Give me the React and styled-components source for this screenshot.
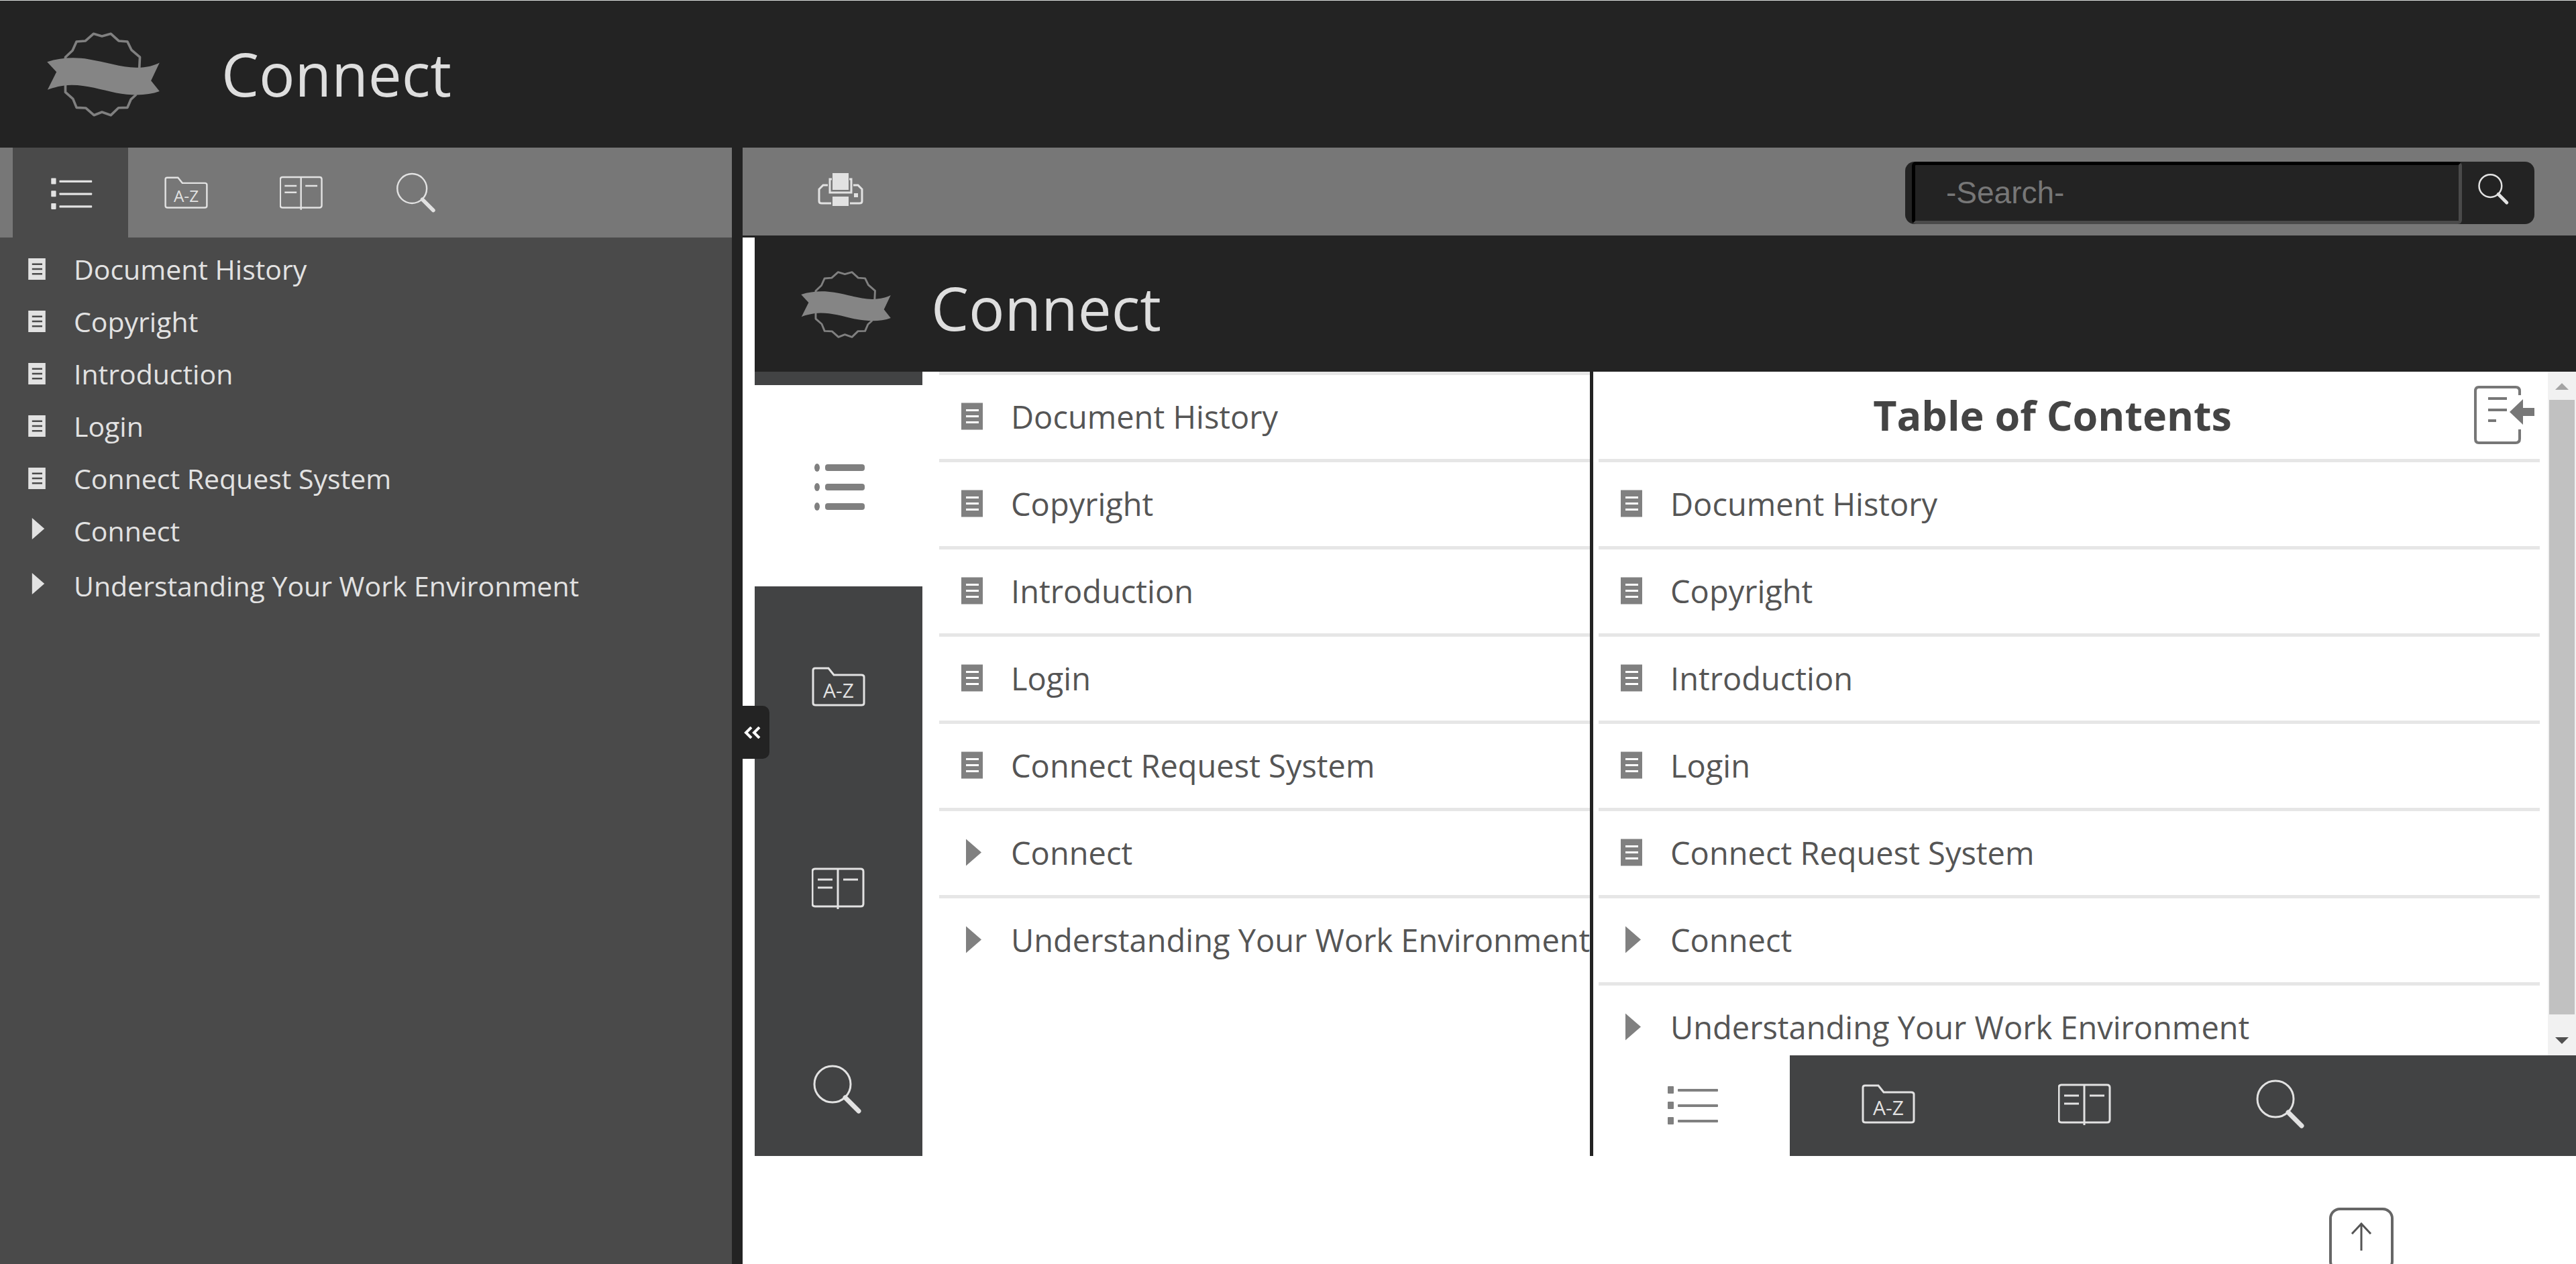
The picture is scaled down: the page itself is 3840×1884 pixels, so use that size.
//------ Imports ------//

import styled, { createGlobalStyle, css } from "styled-components";

//------ Data ------//

const documents = [
    { title: "Document History", type: "page" },
    { title: "Copyright", type: "page" },
    { title: "Introduction", type: "page" },
    { title: "Login", type: "page" },
    { title: "Connect Request System", type: "page" },
    { title: "Connect", type: "folder" },
    { title: "Understanding Your Work Environment", type: "folder" },
];

const tabs = [
    { name: "Contents", icon: ListIcon },
    { name: "Index", icon: FolderIcon },
    { name: "Glossary", icon: BookIcon },
    { name: "Search", icon: SearchIcon },
];

//------ Icons ------//

function Logo() {
    return (
        <svg viewBox="90 50 504 385" fill="none" aria-hidden="true">
            <path
                d="M172 180V165L204 135L222 95L262 92L298 60L336 71L376 60L411 92L450 95L468 132L506 165L503 225M172 280V322L206 352L222 391L264 393L300 425L336 411L376 425L410 392L450 391L466 354L490 332"
                stroke="#808080"
                strokeWidth="11"
                strokeLinejoin="round"
            />
            <path
                d="M90 186C150 166 220 164 275 174C350 186 420 210 490 212C540 212 570 202 594 190L556 270L594 318C540 338 470 338 400 325C330 311 270 290 200 290C155 291 120 301 92 311L132 231Z"
                fill="#858585"
            />
        </svg>
    );
}

function ListIcon() {
    return (
        <svg viewBox="0 0 80 80" aria-hidden="true">
            {[13, 36, 59].map((y) => (
                <g key={y} fill="currentColor">
                    <rect x="4" y={y} width="9" height="11" rx="1" />
                    <rect x="19" y={y + 4} width="60" height="4" rx="1" />
                </g>
            ))}
        </svg>
    );
}

function BoldListIcon() {
    return (
        <svg viewBox="0 0 80 80" aria-hidden="true">
            {[9, 38, 67].map((y) => (
                <g key={y} fill="currentColor">
                    <ellipse cx="8" cy={y + 4} rx="4" ry="6" />
                    <rect x="20" y={y - 1} width="59" height="10" rx="4" />
                </g>
            ))}
        </svg>
    );
}

function FolderIcon() {
    return (
        <svg viewBox="0 0 80 80" fill="none" aria-hidden="true">
            <path
                d="M5 12H25L33 22H74Q78 22 78 25V64Q78 67 74 67H6Q2 67 2 64V15Q2 12 5 12Z"
                stroke="currentColor"
                strokeWidth="3"
            />
            <text
                x="40"
                y="56"
                textAnchor="middle"
                fontFamily="Open Sans, sans-serif"
                fontSize="30"
                fontWeight="400"
                fill="currentColor"
            >
                A-Z
            </text>
        </svg>
    );
}

function BookIcon() {
    return (
        <svg viewBox="0 0 80 80" fill="none" aria-hidden="true">
            <path
                d="M39 11H5Q1 11 1 15V63Q1 67 5 67H73Q77 67 77 63V15Q77 11 73 11H39V71M9 27H31M9 39H31M47 27H69"
                stroke="currentColor"
                strokeWidth="3"
            />
        </svg>
    );
}

function SearchIcon({ weight = 3 }) {
    return (
        <svg viewBox="0 0 80 80" fill="none" aria-hidden="true">
            <circle cx="31" cy="32" r="27" stroke="currentColor" strokeWidth={weight} />
            <path
                d="M50 52L70 72"
                stroke="currentColor"
                strokeWidth={weight + 4}
                strokeLinecap="round"
            />
        </svg>
    );
}

function PageIcon({ line }) {
    return (
        <svg viewBox="0 0 32 40" aria-hidden="true">
            <rect width="32" height="40" fill="currentColor" />
            <path d="M7 11H26M7 20H26M7 29H26" stroke={line} strokeWidth="3" />
        </svg>
    );
}

function ArrowIcon() {
    return (
        <svg viewBox="0 0 32 40" aria-hidden="true">
            <path d="M7 0L30 20L7 40Z" fill="currentColor" />
        </svg>
    );
}

function PrinterIcon() {
    return (
        <svg viewBox="0 0 68 50" fill="none" aria-hidden="true">
            <rect x="22" y="0" width="24" height="25" fill="currentColor" />
            <rect x="22" y="35" width="24" height="14" fill="currentColor" />
            <rect x="54" y="30" width="6" height="6" fill="currentColor" />
            <path
                d="M21 9H18V29H50V9H47M15 18H8L2 24V42Q2 45 6 45H20M53 18H60L66 24V42Q66 45 62 45H48"
                stroke="currentColor"
                strokeWidth="3"
            />
        </svg>
    );
}

function CollapsePageIcon() {
    return (
        <svg viewBox="0 0 90 88" fill="none" aria-hidden="true">
            <path
                d="M68 14V8Q68 2 62 2H7Q2 2 2 8V79Q2 85 7 85H62Q68 85 68 79V65M21 19H49M21 36H49M21 52H33"
                stroke="currentColor"
                strokeWidth="4"
            />
            <path d="M53 39L73 20V33H90V45H73V58Z" fill="currentColor" />
        </svg>
    );
}

/**
 * list of documents, used by the sidebar and both inner panels
 */
function DocumentList({ row: Row, line }) {
    return (
        <List>
            {documents.map((doc) => (
                <Row key={doc.title} $folder={doc.type === "folder"}>
                    {doc.type === "folder" ? <ArrowIcon /> : <PageIcon line={line} />}
                    <a href="#top">{doc.title}</a>
                </Row>
            ))}
        </List>
    );
}

/**
 *
 * @returns help viewer page
 */
export default function App() {
    return (
        <Page>
            <GlobalStyle />
            <Header>
                <Logo />
                <Title>Connect</Title>
            </Header>
            <Body>
                <Sidebar>
                    <SidebarTabs>
                        {tabs.map(({ name, icon: Icon }, index) => (
                            <SidebarTab key={name} aria-label={name} $active={index === 0}>
                                <Icon />
                            </SidebarTab>
                        ))}
                    </SidebarTabs>
                    <DocumentList row={SidebarRow} line="#4a4a4a" />
                </Sidebar>
                <Main>
                    <Toolbar>
                        <PrintButton aria-label="Print">
                            <PrinterIcon />
                        </PrintButton>
                        <SearchForm role="search">
                            <SearchInput aria-label="Search" placeholder="-Search-" />
                            <SearchButton type="button" aria-label="Search">
                                <SearchIcon weight={4} />
                            </SearchButton>
                        </SearchForm>
                    </Toolbar>
                    <CollapseButton aria-label="Hide sidebar">
                        <svg viewBox="0 0 26 18" fill="none" aria-hidden="true">
                            <path d="M12 1L4 9L12 17M24 1L16 9L24 17" stroke="#fff" strokeWidth="4" />
                        </svg>
                    </CollapseButton>
                    <Frame>
                        <FrameHeader>
                            <Logo />
                            <Title>Connect</Title>
                        </FrameHeader>
                        <FrameBody>
                            <SideNav>
                                {tabs.map(({ name, icon: Icon }, index) => (
                                    <SideNavButton key={name} aria-label={name} $active={index === 0}>
                                        {index === 0 ? <BoldListIcon /> : <Icon />}
                                    </SideNavButton>
                                ))}
                            </SideNav>
                            <LeftPanel>
                                <DocumentList row={PanelRow} line="#fff" />
                            </LeftPanel>
                            <RightPanel>
                                <Scroller>
                                    <Contents>
                                        <ContentsHeader>
                                            <h2>Table of Contents</h2>
                                            <button aria-label="Close contents">
                                                <CollapsePageIcon />
                                            </button>
                                        </ContentsHeader>
                                        <DocumentList row={PanelRow} line="#fff" />
                                    </Contents>
                                    <ScrollTrack aria-hidden="true">
                                        <svg viewBox="0 0 20 10">
                                            <path d="M0 10L10 0L20 10Z" fill="#a3a3a3" />
                                        </svg>
                                        <ScrollThumb />
                                        <svg viewBox="0 0 20 10">
                                            <path d="M0 0L10 10L20 0Z" fill="#505050" />
                                        </svg>
                                    </ScrollTrack>
                                </Scroller>
                                <BottomNav>
                                    {tabs.map(({ name, icon: Icon }, index) => (
                                        <BottomNavButton key={name} aria-label={name} $active={index === 0}>
                                            <Icon />
                                        </BottomNavButton>
                                    ))}
                                </BottomNav>
                            </RightPanel>
                        </FrameBody>
                    </Frame>
                    <TopButton aria-label="Back to top">
                        <svg viewBox="0 0 32 42" fill="none" aria-hidden="true">
                            <path d="M16 42V2M2 17L16 2L30 17" stroke="#555" strokeWidth="3" />
                        </svg>
                    </TopButton>
                </Main>
            </Body>
        </Page>
    );
}

/**
 * page style
 */
const GlobalStyle = createGlobalStyle`
    * {
        box-sizing: border-box;
    }
    body {
        margin: 0;
        overflow: hidden;
        font-family: "Open Sans", "Noto Sans", sans-serif;
    }
    button {
        border: 0;
        padding: 0;
        background: none;
        color: inherit;
        cursor: pointer;
    }
    svg {
        display: block;
        flex: none;
    }
    a {
        color: inherit;
        text-decoration: none;
    }
`;

const Page = styled.div`
    display: flex;
    flex-direction: column;
    height: 100vh;
    overflow: hidden;
    background: #fff;
`;

const Header = styled.header`
    display: flex;
    align-items: center;
    flex: none;
    gap: 92px;
    height: 220px;
    padding-left: 70px;
    border-top: 1px solid #dcdfdd;
    background: #232323;

    svg {
        width: 168px;
        height: 128px;
    }
`;

const Title = styled.h1`
    margin: 0;
    padding-bottom: 2px;
    color: #dedede;
    font-size: 89px;
    font-weight: 400;
    line-height: 120px;
`;

const Body = styled.div`
    display: flex;
    flex: 1;
    min-height: 0;
`;

/**
 * sidebar
 */
const Sidebar = styled.aside`
    flex: 0 0 1107px;
    border-right: 16px solid #232323;
    background: #4a4a4a;
    color: #e2e2e2;
`;

const SidebarTabs = styled.nav`
    display: flex;
    height: 134px;
    padding-left: 19px;
    background: #777;
`;

const SidebarTab = styled.button`
    display: flex;
    align-items: center;
    justify-content: center;
    width: 172px;
    background: ${(props) => (props.$active ? "#4a4a4a" : "transparent")};

    svg {
        width: 65px;
        height: 65px;
    }
`;

const List = styled.ul`
    margin: 0;
    padding: 0;
    list-style: none;
`;

const SidebarRow = styled.li`
    display: flex;
    align-items: center;
    gap: 42px;
    height: 78px;
    padding-left: 42px;
    font-size: 41px;
    white-space: nowrap;

    &:first-child {
        margin-top: 8px;
    }

    svg {
        width: 26px;
        height: 32px;
    }

    ${(props) =>
        props.$folder &&
        css`
            margin-bottom: 4px;

            svg {
                margin-bottom: 6px;
            }
        `}
`;

/**
 * content area
 */
const Main = styled.main`
    position: relative;
    flex: 1;
    min-width: 0;
    overflow: hidden;
`;

const Toolbar = styled.div`
    display: flex;
    align-items: flex-start;
    justify-content: space-between;
    height: 134px;
    padding: 21px 62px 0 112px;
    border-bottom: 3px solid #232323;
    background: #777;
`;

const PrintButton = styled.button`
    padding-top: 17px;
    color: #e2e2e2;

    svg {
        width: 68px;
        height: 50px;
    }
`;

const SearchForm = styled.form`
    display: flex;
    width: 938px;
    height: 93px;
    padding-left: 10px;
    border-radius: 14px;
    background: #232323;
    overflow: hidden;
`;

const SearchInput = styled.input`
    flex: 1;
    min-width: 0;
    padding: 0 46px 2px;
    border: 5px solid;
    border-color: #000 #4a4a4a #4a4a4a #000;
    border-radius: 6px;
    background: #232323;
    color: #dedede;
    font-family: "Liberation Sans", Arial, sans-serif;
    font-size: 46px;

    &::placeholder {
        color: #777;
    }
`;

const SearchButton = styled.button`
    display: flex;
    width: 108px;
    padding: 16px 0 0 23px;
    color: #e2e2e2;

    svg {
        width: 50px;
        height: 50px;
    }
`;

const CollapseButton = styled.button`
    position: absolute;
    top: 50%;
    left: 0;
    display: flex;
    align-items: center;
    width: 40px;
    height: 79px;
    border-radius: 0 10px 10px 0;
    background: #232323;

    svg {
        width: 28px;
        height: 18px;
    }
`;

const Frame = styled.section`
    margin-left: 18px;
`;

const FrameHeader = styled.header`
    display: flex;
    align-items: center;
    gap: 60px;
    height: 200px;
    padding-left: 69px;
    background: #232323;

    svg {
        width: 134px;
        height: 102px;
    }

    h1 {
        padding: 10px 0 0;
    }
`;

const FrameBody = styled.div`
    display: grid;
    grid-template-columns: 250px minmax(0, 995fr) minmax(0, 1470fr);
    height: 1169px;
`;

const SideNav = styled.nav`
    display: flex;
    flex-direction: column;
    padding-top: 20px;
    background: #424344;
    color: #e2e2e2;
    overflow: hidden;
`;

const SideNavButton = styled.button`
    display: flex;
    align-items: center;
    justify-content: center;
    flex: 0 0 300px;
    background: ${(props) => (props.$active ? "#fff" : "transparent")};
    color: ${(props) => (props.$active ? "#808080" : "#e2e2e2")};

    svg {
        width: 80px;
        height: 80px;
    }
`;

const LeftPanel = styled.div`
    padding-left: 25px;
`;

const PanelRow = styled.li`
    display: flex;
    align-items: center;
    gap: 42px;
    height: 130px;
    padding: 0 0 2px 33px;
    border-top: 5px solid #e6e6e6;
    color: #555;
    font-size: 47px;
    white-space: nowrap;

    svg {
        width: 32px;
        height: 41px;
        color: #808080;
    }
`;

const RightPanel = styled.div`
    display: flex;
    flex-direction: column;
    min-height: 0;
    border-left: 5px solid #232323;
`;

const Scroller = styled.div`
    display: flex;
    flex: 1;
    min-height: 0;
`;

const Contents = styled.div`
    flex: 1;
    min-width: 0;
    padding: 0 12px 0 8px;
    overflow: hidden;
`;

const ContentsHeader = styled.div`
    display: flex;
    align-items: center;
    height: 130px;
    padding: 0 8px 0 48px;

    h2 {
        flex: 1;
        margin: 0;
        color: #444;
        font-size: 61px;
        font-weight: 700;
        line-height: 80px;
        text-align: center;
    }

    button {
        color: #777;
    }

    svg {
        width: 90px;
        height: 88px;
    }
`;

const ScrollTrack = styled.div`
    display: flex;
    flex-direction: column;
    align-items: center;
    width: 42px;
    padding: 17px 0;
    background: #f1f1f1;

    svg {
        width: 20px;
        height: 10px;
    }
`;

const ScrollThumb = styled.div`
    flex: 1;
    width: 38px;
    margin: 15px 0 34px;
    background: #c1c1c1;
`;

const BottomNav = styled.nav`
    display: flex;
    height: 150px;
    background: #424344;
`;

const BottomNavButton = styled.button`
    display: flex;
    align-items: center;
    justify-content: center;
    width: 20%;
    padding-bottom: 4px;
    background: ${(props) => (props.$active ? "#fff" : "transparent")};
    color: ${(props) => (props.$active ? "#808080" : "#e2e2e2")};

    svg {
        width: 80px;
        height: 80px;
    }
`;

const TopButton = styled.button`
    display: flex;
    justify-content: center;
    width: 96px;
    height: 96px;
    margin: 77px 272px 0 auto;
    padding-top: 18px;
    border: 4px solid #666;
    border-radius: 16px;

    svg {
        width: 32px;
        height: 42px;
    }
`;
